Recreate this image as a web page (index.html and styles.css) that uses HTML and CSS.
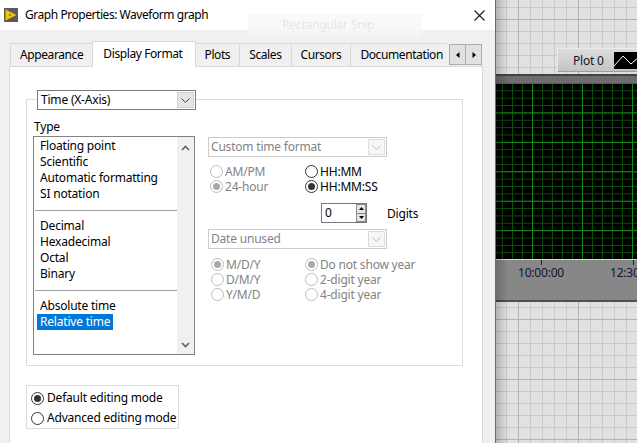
FILE: index.html
```html
<!DOCTYPE html>
<html>
<head>
<meta charset="utf-8">
<title>Graph Properties: Waveform graph</title>
<link rel="stylesheet" href="styles.css">
</head>
<body>
<div class="desk">
  <div class="dialog">
    <div class="titlebar">
      <svg class="app-icon" width="14" height="14" viewBox="0 0 14 14"><rect width="14" height="14" fill="#5b5b5b"/><path d="M1.5 1.5 L12.5 7 L1.5 12.5 Z" fill="#f4c400"/><rect x="5" y="6" width="2" height="2" fill="#b07a00"/></svg>
      <span class="title">Graph Properties: Waveform graph</span>
      <svg class="close" width="11" height="11" viewBox="0 0 11 11"><path d="M0.5 0.5 L10.5 10.5 M10.5 0.5 L0.5 10.5" stroke="#1a1a1a" stroke-width="1.1" fill="none"/></svg>
    </div>
    <div class="snip-ghost">Rectangular Snip</div>
    <div class="dlg-body">
      <div class="tabs">
        <div class="tab-strip">
          <div class="tab first">Appearance</div>
          <div class="tab active">Display Format</div>
          <div class="tab">Plots</div>
          <div class="tab">Scales</div>
          <div class="tab">Cursors</div>
          <div class="tab">Documentation</div>
        </div>
        <div class="tab-scroll">
          <span class="sbtn"><svg width="4" height="6" viewBox="0 0 4 6"><path d="M3.5 0 L0 3 L3.5 6 Z" fill="#000"/></svg></span>
          <span class="sbtn"><svg width="4" height="6" viewBox="0 0 4 6"><path d="M0.5 0 L4 3 L0.5 6 Z" fill="#000"/></svg></span>
        </div>
      </div>
      <div class="panel">
        <div class="group">
          <div class="combo axis-combo">
            <span class="combo-text">Time (X-Axis)</span>
            <span class="combo-btn"><svg width="9" height="5" viewBox="0 0 9 5"><path d="M0.5 0.5 L4.5 4.5 L8.5 0.5" stroke="#444" fill="none"/></svg></span>
          </div>
          <div class="group-row">
            <div class="type-col">
              <div class="type-label">Type</div>
              <div class="listbox">
                <div class="list-items">
                  <div class="item">Floating point</div>
                  <div class="item">Scientific</div>
                  <div class="item">Automatic formatting</div>
                  <div class="item">SI notation</div>
                  <div class="sep"></div>
                  <div class="item">Decimal</div>
                  <div class="item">Hexadecimal</div>
                  <div class="item">Octal</div>
                  <div class="item">Binary</div>
                  <div class="sep"></div>
                  <div class="item">Absolute time</div>
                  <div class="item"><span class="sel">Relative time</span></div>
                </div>
                <div class="vscroll">
                  <svg width="9" height="6" viewBox="0 0 9 6"><path d="M1 5 L4.5 1.5 L8 5" stroke="#606060" stroke-width="1.6" fill="none"/></svg>
                  <svg width="9" height="6" viewBox="0 0 9 6"><path d="M1 1 L4.5 4.5 L8 1" stroke="#606060" stroke-width="1.6" fill="none"/></svg>
                </div>
              </div>
            </div>
            <div class="fmt-col">
              <div class="combo disabled">
                <span class="combo-text">Custom time format</span>
                <span class="combo-btn"><svg width="9" height="5" viewBox="0 0 9 5"><path d="M0.5 0.5 L4.5 4.5 L8.5 0.5" stroke="#bdbdbd" fill="none"/></svg></span>
              </div>
              <div class="radio-grid time-grid">
                <div class="opt dis"><span class="radio"></span>AM/PM</div>
                <div class="opt"><span class="radio"></span>HH:MM</div>
                <div class="opt dis"><span class="radio on"></span>24-hour</div>
                <div class="opt"><span class="radio on"></span>HH:MM:SS</div>
              </div>
              <div class="digits-row">
                <div class="numeric">
                  <span class="num-val">0</span>
                  <span class="spin">
                    <span class="spin-btn"><svg width="5" height="3" viewBox="0 0 5 3"><path d="M0 3 L2.5 0 L5 3 Z" fill="#000"/></svg></span>
                    <span class="spin-btn"><svg width="5" height="3" viewBox="0 0 5 3"><path d="M0 0 L2.5 3 L5 0 Z" fill="#000"/></svg></span>
                  </span>
                </div>
                <span class="digits-label">Digits</span>
              </div>
              <div class="combo disabled date-combo">
                <span class="combo-text">Date unused</span>
                <span class="combo-btn"><svg width="9" height="5" viewBox="0 0 9 5"><path d="M0.5 0.5 L4.5 4.5 L8.5 0.5" stroke="#bdbdbd" fill="none"/></svg></span>
              </div>
              <div class="radio-grid date-grid">
                <div class="opt dis"><span class="radio on"></span>M/D/Y</div>
                <div class="opt dis"><span class="radio on"></span>Do not show year</div>
                <div class="opt dis"><span class="radio"></span>D/M/Y</div>
                <div class="opt dis"><span class="radio"></span>2-digit year</div>
                <div class="opt dis"><span class="radio"></span>Y/M/D</div>
                <div class="opt dis"><span class="radio"></span>4-digit year</div>
              </div>
            </div>
          </div>
        </div>
        <div class="mode-box">
          <div class="opt mode"><span class="radio on"></span>Default editing mode</div>
          <div class="opt mode"><span class="radio"></span>Advanced editing mode</div>
        </div>
      </div>
    </div>
  </div>
  <div class="canvas">
    <div class="legend">
      <span class="legend-label">Plot 0</span>
      <span class="swatch"><svg width="26" height="17" viewBox="0 0 26 17"><path d="M0 14 L9 4 L17 12 L26 4" stroke="#fff" stroke-width="1" fill="none"/></svg></span>
    </div>
    <div class="graph">
      <div class="graph-top"></div>
      <div class="plot"></div>
      <div class="axis">
        <span class="tick t1"></span>
        <span class="tick t2"></span>
        <span class="tick-label t1">10:00:00</span>
        <span class="tick-label t2">12:30:00</span>
      </div>
    </div>
  </div>
</div>
</body>
</html>
```

FILE: styles.css
```css
* { box-sizing: border-box; }

html, body {
  margin: 0;
  padding: 0;
}

body {
  width: 637px;
  height: 443px;
  overflow: hidden;
  font-family: "Noto Sans", "Open Sans", sans-serif;
  font-size: 12px;
  letter-spacing: -0.2px;
  color: #000;
  background: #e1e1e1;
}

.desk {
  display: flex;
  height: 443px;
}

/* ---------- dialog window ---------- */
.dialog {
  width: 496px;
  flex: none;
  background: #f0f0f0;
  border-right: 1px solid #2a78c9;
  display: flex;
  flex-direction: column;
  position: relative;
  z-index: 2;
}

.titlebar {
  height: 30px;
  background: #fff;
  display: flex;
  align-items: center;
  padding-left: 4px;
}

.app-icon {
  flex: none;
  margin-right: 7px;
}

.title {
  flex: 1;
  line-height: 16px;
  letter-spacing: -0.45px;
}

.close {
  flex: none;
  margin-right: 10px;
}

.snip-ghost {
  position: absolute;
  left: 248px;
  top: 14px;
  width: 174px;
  height: 22px;
  padding-left: 34px;
  line-height: 22px;
  background: rgba(247, 247, 247, 0.7);
  color: #e6e6e6;
}

.dlg-body {
  flex: 1;
  display: flex;
  flex-direction: column;
  padding: 11px 0 0 9px;
}

/* ---------- tabs ---------- */
.tabs {
  display: flex;
  height: 26px;
  margin-bottom: -1px;
  margin-left: 1px;
  position: relative;
  z-index: 1;
}

.tab-strip {
  width: 437px;
  height: 26px;
  overflow: hidden;
  display: flex;
  align-items: flex-start;
  flex: none;
}

.tab {
  flex: none;
  height: 23px;
  margin-top: 2px;
  margin-left: -1px;
  padding: 0 9px;
  line-height: 22px;
  letter-spacing: -0.4px;
  border: 1px solid #d9d9d9;
  border-bottom: none;
  background: #f0f0f0;
  white-space: nowrap;
}

.tab.first {
  margin-left: 0;
}

.tab.active {
  height: 26px;
  margin-top: 0;
  padding: 0 12px 0 10px;
  line-height: 23px;
  background: #fff;
  position: relative;
  z-index: 1;
}

.tab-scroll {
  display: flex;
  margin-left: 2px;
  margin-top: 3px;
}

.sbtn {
  width: 17px;
  height: 21px;
  border: 1px solid #adadad;
  background: #e1e1e1;
  display: flex;
  align-items: center;
  justify-content: center;
}

.sbtn + .sbtn {
  margin-left: -1px;
}

/* ---------- panel ---------- */
.panel {
  flex: 1;
  width: 474px;
  background: #fff;
  border: 1px solid #d9d9d9;
  border-bottom: none;
  padding: 32px 0 0 16px;
}

.group {
  width: 437px;
  height: 267px;
  border: 1px solid #dcdcdc;
}

.combo {
  display: flex;
  align-items: center;
  height: 20px;
  border: 1px solid #7a7a7a;
  background: #fff;
}

.combo-text {
  flex: 1;
  padding-left: 3px;
  line-height: 16px;
  white-space: nowrap;
}

.combo-btn {
  flex: none;
  width: 17px;
  height: 16px;
  margin-right: 1px;
  background: #e5e5e5;
  border: 1px solid #cfcfcf;
  display: flex;
  align-items: center;
  justify-content: center;
}

.axis-combo {
  width: 159px;
  margin: -10px 0 0 10px;
}

.combo.disabled {
  width: 179px;
  border-color: #cccccc;
  color: #838383;
}

.combo.disabled .combo-text {
  padding-left: 2px;
}

.combo.disabled .combo-btn {
  background: #f6f6f6;
  border-color: #dddddd;
}

.group-row {
  display: flex;
  margin: 9px 0 0 6px;
}

.type-col {
  width: 162px;
  flex: none;
}

.type-label {
  line-height: 16px;
  padding-left: 1px;
}

.listbox {
  margin-top: 1px;
  height: 219px;
  border: 1px solid #828282;
  display: flex;
}

.list-items {
  flex: 1;
  padding-top: 1px;
}

.item {
  height: 16px;
  line-height: 16px;
  padding-left: 6px;
  white-space: nowrap;
}

.item .sel {
  display: inline-block;
  margin-left: -3px;
  padding: 0 3px;
  background: #0078d7;
  color: #fff;
}

.sep {
  height: 16px;
  margin-left: 1px;
  position: relative;
}

.sep::after {
  content: "";
  position: absolute;
  left: 0;
  right: 0;
  top: 8px;
  border-top: 1px solid #a0a0a0;
}

.vscroll {
  width: 17px;
  flex: none;
  background: #f0f0f0;
  display: flex;
  flex-direction: column;
  justify-content: space-between;
  align-items: center;
  padding: 8px 0 6px;
}

.fmt-col {
  margin-left: 13px;
  padding-top: 18px;
}

.radio-grid {
  display: grid;
  grid-auto-rows: 15px;
  margin-left: 2px;
}

.time-grid {
  grid-template-columns: 95px auto;
  margin-top: 7px;
}

.date-grid {
  grid-template-columns: 94px auto;
  margin-top: 8px;
  margin-left: 3px;
}

.opt {
  display: flex;
  align-items: center;
  line-height: 15px;
  white-space: nowrap;
}

.radio {
  flex: none;
  width: 13px;
  height: 13px;
  margin-right: 2px;
  border: 1px solid #333;
  border-radius: 50%;
  background: #fff;
  display: flex;
  align-items: center;
  justify-content: center;
}

.radio.on::after {
  content: "";
  width: 7px;
  height: 7px;
  border-radius: 50%;
  background: #333;
}

.dis {
  color: #838383;
}

.dis .radio {
  border-color: #bcbcbc;
}

.dis .radio.on::after {
  background: #a9a9a9;
}

.digits-row {
  display: flex;
  align-items: center;
  margin-top: 9px;
}

.numeric {
  margin-left: 113px;
  width: 46px;
  height: 20px;
  border: 1px solid #7a7a7a;
  background: #fff;
  display: flex;
}

.num-val {
  flex: 1;
  padding-left: 3px;
  line-height: 18px;
}

.spin {
  width: 10px;
  display: flex;
  flex-direction: column;
}

.spin-btn {
  flex: 1;
  background: #e6e6e6;
  border: 1px solid #8a8a8a;
  display: flex;
  align-items: center;
  justify-content: center;
}

.spin-btn + .spin-btn {
  border-top: none;
}

.digits-label {
  margin-left: 20px;
}

.date-combo {
  margin-top: 6px;
}

.mode-box {
  width: 153px;
  height: 44px;
  margin-top: 19px;
  border: 1px solid #dcdcdc;
  padding: 2px 0 0 4px;
}

.opt.mode {
  line-height: 20px;
  height: 20px;
}

.opt.mode .radio {
  margin-right: 3px;
}

/* ---------- LabVIEW front panel canvas ---------- */
.canvas {
  flex: 1;
  position: relative;
  overflow: hidden;
  background-color: #e1e1e1;
  background-image:
    linear-gradient(to right, #b3b3b3 1px, transparent 1px),
    linear-gradient(to bottom, #b3b3b3 1px, transparent 1px),
    linear-gradient(to right, #c9c9c9 1px, transparent 1px),
    linear-gradient(to bottom, #c9c9c9 1px, transparent 1px);
  background-size: 60px 100%, 100% 60px, 12px 100%, 100% 12px;
  background-position: 22px 0, 0 19px, 10px 0, 0 7px;
}

.canvas::before {
  content: "";
  position: absolute;
  left: 0;
  top: 0;
  bottom: 0;
  width: 12px;
  background: linear-gradient(to right, rgba(0, 0, 0, 0.2), rgba(0, 0, 0, 0));
  z-index: 3;
}

.legend {
  position: absolute;
  left: 61px;
  top: 48px;
  width: 90px;
  height: 24px;
  display: flex;
  align-items: center;
  background: linear-gradient(#dddddd, #c4c4c4);
  border-top: 1px solid #ececec;
  border-left: 1px solid #e8e8e8;
  border-bottom: 1px solid #9c9c9c;
}

.legend-label {
  width: 56px;
  padding-left: 15px;
  color: #14142a;
  white-space: nowrap;
}

.swatch {
  width: 26px;
  height: 17px;
  background: #000;
  display: flex;
}

.graph {
  position: absolute;
  left: 0;
  right: 0;
  top: 74px;
  height: 228px;
  display: flex;
  flex-direction: column;
  border-bottom: 2px solid #4f4f4f;
}

.graph-top {
  height: 9px;
  background: #6d6d6d;
  border-top: 2px solid #434343;
}

.plot {
  height: 177px;
  background-color: #000;
  background-image:
    linear-gradient(to right, #138c13 1px, transparent 1px),
    linear-gradient(to bottom, #138c13 1px, transparent 1px),
    linear-gradient(to right, #0c4f0c 1px, transparent 1px),
    linear-gradient(to bottom, #0c4f0c 1px, transparent 1px);
  background-size: 50px 100%, 100% 29.44px, 10px 100%, 100% 7.36px;
  background-position: 36px 0, 0 0, 6px 0, 0 0;
  border-bottom: 1px solid #d8d8d8;
}

.axis {
  flex: 1;
  position: relative;
  background: #878787;
}

.tick {
  position: absolute;
  top: 0;
  width: 1px;
  height: 5px;
  background: #1e1e1e;
}

.tick-label {
  position: absolute;
  top: 5px;
  line-height: 16px;
  color: #15152a;
  transform: translateX(-50%);
  white-space: nowrap;
}

.t1 { left: 45px; }
.t2 { left: 137px; }
```
